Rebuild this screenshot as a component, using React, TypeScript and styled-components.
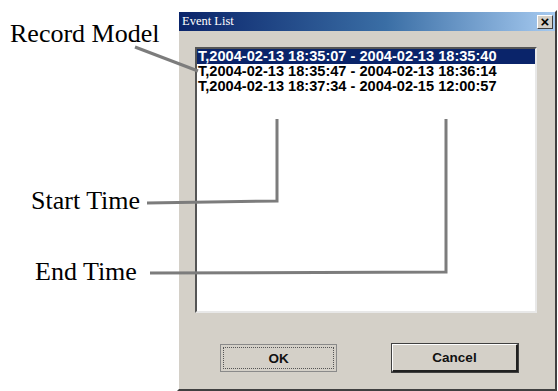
import React from "react";
import styled, { createGlobalStyle } from "styled-components";

const Global = createGlobalStyle`
  html, body { margin: 0; padding: 0; background: #ffffff; }
  #root { width: 558px; height: 391px; }
`;

const Page = styled.div`
  position: relative;
  width: 558px;
  height: 391px;
  display: flex;
  background: #ffffff;
  overflow: hidden;
`;

const LabelColumn = styled.div`
  width: 177px;
  flex: none;
  display: flex;
  flex-direction: column;
`;

const Label = styled.div<{ $top: number; $left: number }>`
  margin-top: ${(p) => p.$top}px;
  margin-left: ${(p) => p.$left}px;
  font-family: "Liberation Serif", "Times New Roman", serif;
  font-size: 26px;
  line-height: 30px;
  color: #000;
  white-space: nowrap;
`;

const Dialog = styled.div`
  margin-top: 10px;
  width: 380px;
  height: 381px;
  box-sizing: border-box;
  background: #d4d0c8;
  border-style: solid;
  border-width: 2px;
  border-color: #ffffff #404040 #404040 #ffffff;
  display: flex;
  flex-direction: column;
`;

const TitleBar = styled.div`
  height: 19px;
  display: flex;
  align-items: center;
  justify-content: space-between;
  padding: 0 2px 0 3px;
  background: linear-gradient(to right, #0a246a 0%, #3a6ea5 55%, #a6caf0 100%);
`;

const Title = styled.span`
  font-family: "Liberation Serif", "Times New Roman", serif;
  font-size: 12.5px;
  color: #ffffff;
`;

const CloseButton = styled.div`
  width: 16px;
  height: 14px;
  box-sizing: border-box;
  background: #d4d0c8;
  border-style: solid;
  border-width: 1px;
  border-color: #ffffff #404040 #404040 #ffffff;
  display: flex;
  align-items: center;
  justify-content: center;
  font-family: "Liberation Sans", Arial, sans-serif;
  font-weight: bold;
  font-size: 15px;
  line-height: 12px;
  color: #000;
`;

const Body = styled.div`
  display: flex;
  flex-direction: column;
  padding: 16px 0 0 16px;
`;

const ListBox = styled.div`
  width: 342px;
  height: 266px;
  box-sizing: border-box;
  background: #ffffff;
  border-style: solid;
  border-width: 2px;
  border-color: #555555 #e8e8e8 #e8e8e8 #555555;
  display: flex;
  flex-direction: column;
`;

const Row = styled.div<{ $selected?: boolean }>`
  height: 15px;
  line-height: 15px;
  padding-left: 1px;
  font-family: "Liberation Sans", Arial, sans-serif;
  font-weight: bold;
  font-size: 14.6px;
  white-space: nowrap;
  color: ${(p) => (p.$selected ? "#ffffff" : "#000000")};
  background: ${(p) => (p.$selected ? "#0a246a" : "transparent")};
`;

const ButtonRow = styled.div`
  display: flex;
  margin-top: 31px;
  padding-left: 25px;
  gap: 55px;
`;

const Button = styled.div<{ $width: number; $focused?: boolean }>`
  width: ${(p) => p.$width}px;
  height: 28px;
  box-sizing: border-box;
  background: #d4d0c8;
  border-style: solid;
  border-width: ${(p) => (p.$focused ? "1px" : "1px 2px 2px 1px")};
  border-color: ${(p) =>
    p.$focused ? "#8a8a8a" : "#ffffff #202020 #202020 #ffffff"};
  outline: ${(p) => (p.$focused ? "none" : "1px solid #404040")};
  display: flex;
  align-items: center;
  justify-content: center;
  font-family: "Liberation Sans", Arial, sans-serif;
  font-weight: bold;
  font-size: 13.5px;
  color: #111;
  position: relative;
`;

const FocusRing = styled.div`
  position: absolute;
  inset: 2px;
  border: 1px dotted #555;
`;

const Overlay = styled.svg`
  position: absolute;
  left: 0;
  top: 0;
  pointer-events: none;
`;

const rows = [
  "T,2004-02-13 18:35:07 - 2004-02-13 18:35:40",
  "T,2004-02-13 18:35:47 - 2004-02-13 18:36:14",
  "T,2004-02-13 18:37:34 - 2004-02-15 12:00:57",
];

export default function App() {
  return (
    <>
      <Global />
      <Page>
        <LabelColumn>
          <Label $top={19} $left={10}>Record Model</Label>
          <Label $top={137} $left={31}>Start Time</Label>
          <Label $top={41} $left={35}>End Time</Label>
        </LabelColumn>
        <Dialog>
          <TitleBar>
            <Title>Event List</Title>
            <CloseButton>×</CloseButton>
          </TitleBar>
          <Body>
            <ListBox>
              {rows.map((r, i) => (
                <Row key={i} $selected={i === 0}>
                  {r}
                </Row>
              ))}
            </ListBox>
            <ButtonRow>
              <Button $width={117} $focused>
                <FocusRing />
                OK
              </Button>
              <Button $width={126}>Cancel</Button>
            </ButtonRow>
          </Body>
        </Dialog>
        <Overlay width="558" height="391" viewBox="0 0 558 391">
          <g fill="none" stroke="#7c7c7c" strokeWidth="3" strokeLinejoin="miter">
            <polyline points="135,47 198,71" />
            <polyline points="147,203 277,201 277,119" />
            <polyline points="150,273 446,272 446,119" />
          </g>
        </Overlay>
      </Page>
    </>
  );
}
